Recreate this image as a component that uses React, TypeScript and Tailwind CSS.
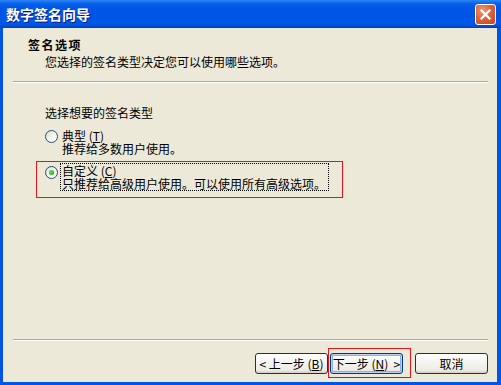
import React from "react";

const FONT = { fontFamily: '"Noto Sans CJK SC", "Noto Sans", sans-serif' };

function Radio({ checked }: { checked?: boolean }) {
  return (
    <div
      className="w-[13px] h-[13px] rounded-full border border-[#1C5180] flex items-center justify-center shrink-0"
      style={{ background: "linear-gradient(135deg, #DCDBD2 0%, #F4F3EE 50%, #FFFFFF 100%)" }}
    >
      {checked && (
        <div
          className="w-[5px] h-[5px] rounded-full"
          style={{ background: "radial-gradient(circle at 40% 40%, #6FE06B 0%, #2EAE2A 60%, #1E8A1B 100%)" }}
        />
      )}
    </div>
  );
}

function XpButton({ children, isDefault }: { children: React.ReactNode; isDefault?: boolean }) {
  return (
    <div
      className="w-[73px] h-[21px] rounded-[3px] border border-[#003C74] flex items-center justify-center text-[12px] leading-[12px] text-black whitespace-pre"
      style={{
        background: "linear-gradient(to bottom, #FFFFFF 0%, #F6F5F0 40%, #ECEBE4 85%, #D6D0C5 100%)",
        boxShadow: isDefault ? "inset 0 0 0 1px #B9D1FA, inset 0 0 0 2px #8DAEF0" : "inset 0 -1px 0 #D6D0C5",
      }}
    >
      {children}
    </div>
  );
}

export default function App() {
  return (
    <div className="w-[501px] h-[385px] relative flex flex-col bg-[#0055E5] overflow-hidden" style={FONT}>
      {/* Title bar */}
      <div
        className="h-[28px] shrink-0 flex items-center justify-between pl-[6px] pr-[5px]"
        style={{
          background:
            "linear-gradient(to bottom, #2E86F6 0%, #0A63EB 12%, #0058E6 25%, #0055E4 55%, #0059EA 80%, #0051DB 92%, #003FB8 100%)",
        }}
      >
        <span
          className="text-white font-bold text-[14px] leading-[14px]"
          style={{ textShadow: "1px 1px 0 #0A1883" }}
        >
          数字签名向导
        </span>
        <div
          className="w-[21px] h-[21px] rounded-[3px] border border-white flex items-center justify-center"
          style={{ background: "radial-gradient(circle at 35% 30%, #EE9A7C 0%, #E2623A 45%, #CC4416 100%)" }}
        >
          <svg width="13" height="13" viewBox="0 0 13 13">
            <path d="M2.5 2.5 L10.5 10.5 M10.5 2.5 L2.5 10.5" stroke="white" strokeWidth="2.2" strokeLinecap="square" />
          </svg>
        </div>
      </div>

      {/* Body */}
      <div className="flex-1 flex flex-col bg-[#ECE9D8] ml-[3px] mr-[4px] mb-[3px] text-[12px] text-black">
        {/* Header */}
        <div className="h-[53px] shrink-0 pt-[10px]">
          <div className="pl-[25px] font-bold leading-[13px] tracking-[1.5px]">签名选项</div>
          <div className="pl-[42px] mt-[4px] leading-[13px]">您选择的签名类型决定您可以使用哪些选项。</div>
        </div>
        <div className="ml-[10px] mr-[9px] h-[2px] border-t border-[#ACA899] border-b border-b-white shrink-0" />

        {/* Content */}
        <div className="flex-1 pt-[23px] pl-[42px]">
          <div className="leading-[13px]">选择想要的签名类型</div>
          <div className="mt-[10px] flex items-start">
            <div className="mt-[1px]">
              <Radio />
            </div>
            <div className="ml-[4px] leading-[13px]">
              <div>
                典型 (<u>T</u>)
              </div>
              <div>推荐给多数用户使用。</div>
            </div>
          </div>
          <div className="mt-[8px] flex items-start">
            <div className="mt-[3px]">
              <Radio checked />
            </div>
            <div className="ml-[2px] border border-dotted border-black pl-[1px] pr-[2px] leading-[13px]">
              <div>
                自定义 (<u>C</u>)
              </div>
              <div>只推荐给高级用户使用。可以使用所有高级选项。</div>
            </div>
          </div>
        </div>

        {/* Bottom */}
        <div className="ml-[10px] mr-[9px] h-[2px] border-t border-[#ACA899] border-b border-b-white shrink-0" />
        <div className="h-[41px] shrink-0 flex items-start justify-end pr-[9px] pt-[12px]">
          <XpButton>
            {"< 上一步 ("}
            <u>B</u>
            {")"}
          </XpButton>
          <div className="ml-[2px]">
            <XpButton isDefault>
              {"下一步 ("}
              <u>N</u>
              {")  >"}
            </XpButton>
          </div>
          <div className="ml-[12px]">
            <XpButton>取消</XpButton>
          </div>
        </div>
      </div>

      {/* Annotation boxes */}
      <div className="absolute left-[36px] top-[161px] w-[307px] h-[37px] border border-[#E8141B] pointer-events-none" />
      <div className="absolute left-[328px] top-[348px] w-[83px] h-[30px] border border-[#E8141B] pointer-events-none" />
    </div>
  );
}
